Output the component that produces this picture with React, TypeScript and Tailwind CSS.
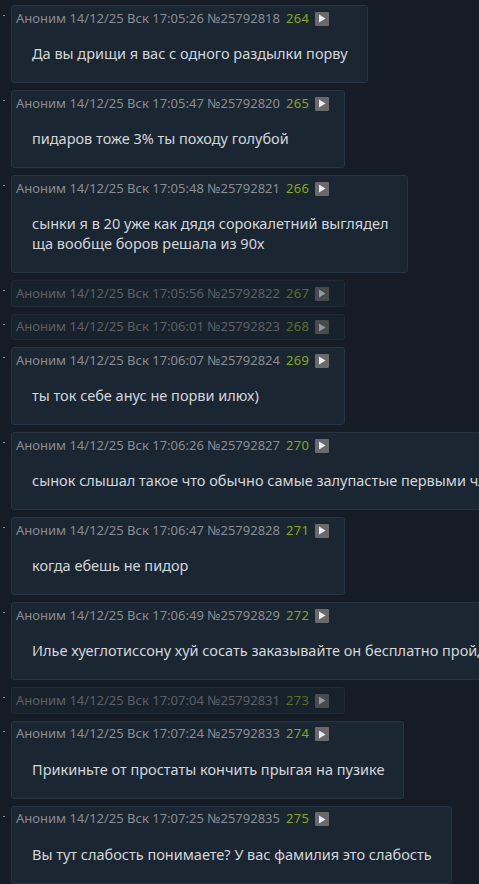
import React from "react";

type Post = {
  time: string;
  num: string;
  idx: number;
  lines?: string[];
  hidden?: boolean;
};

const posts: Post[] = [
  { time: "17:05:26", num: "25792818", idx: 264, lines: ["Да вы дрищи я вас с одного раздылки порву"] },
  { time: "17:05:47", num: "25792820", idx: 265, lines: ["пидаров тоже 3% ты походу голубой"] },
  {
    time: "17:05:48",
    num: "25792821",
    idx: 266,
    lines: ["сынки я в 20 уже как дядя сорокалетний выглядел", "ща вообще боров решала из 90х"],
  },
  { time: "17:05:56", num: "25792822", idx: 267, hidden: true },
  { time: "17:06:01", num: "25792823", idx: 268, hidden: true },
  { time: "17:06:07", num: "25792824", idx: 269, lines: ["ты ток себе анус не порви илюх)"] },
  {
    time: "17:06:26",
    num: "25792827",
    idx: 270,
    lines: ["сынок слышал такое что обычно самые залупастые первыми члены теряют"],
  },
  { time: "17:06:47", num: "25792828", idx: 271, lines: ["когда ебешь не пидор"] },
  {
    time: "17:06:49",
    num: "25792829",
    idx: 272,
    lines: ["Илье хуеглотиссону хуй сосать заказывайте он бесплатно пройдёт"],
  },
  { time: "17:07:04", num: "25792831", idx: 273, hidden: true },
  { time: "17:07:24", num: "25792833", idx: 274, lines: ["Прикиньте от простаты кончить прыгая на пузике"] },
  { time: "17:07:25", num: "25792835", idx: 275, lines: ["Вы тут слабость понимаете? У вас фамилия это слабость"] },
];

function PlayBtn() {
  return (
    <span className="inline-flex items-center justify-center w-[14px] h-[14px] bg-[#6a6a6a] rounded-[1px]">
      <svg width="8" height="9" viewBox="0 0 8 9">
        <path d="M1 0.5 L7.5 4.5 L1 8.5 Z" fill="#ececec" />
      </svg>
    </span>
  );
}

function PostRow({ p }: { p: Post }) {
  return (
    <div className="flex items-start">
      <div className="w-[11px] shrink-0 flex pl-[3px] pt-[10px]">
        <span className="block w-[2px] h-[1px] bg-[#8a8f95]" />
      </div>
      <div
        className={
          "inline-block shrink-0 bg-[#1b2633] border border-[#263343] rounded-[3px] " +
          (p.hidden ? "opacity-60 h-[26.5px]" : "")
        }
      >
        <div className="flex items-center h-[25px] pl-[4px] pr-[15px] text-[13px] text-[#898d92] whitespace-nowrap">
          <span>Аноним 14/12/25 Вск {p.time} №{p.num}</span>
          <span className="ml-[6px] text-[#86a61f] tracking-[0.3px]">{p.idx}</span>
          <span className="ml-[6px] flex">
            <PlayBtn />
          </span>
        </div>
        {p.lines && (
          <div className="pl-[20px] pr-[19px] pt-[12px] pb-[19px] text-[14.5px] leading-[20px] text-[#d3d6d9] whitespace-nowrap">
            {p.lines.map((l, i) => (
              <div key={i}>{l}</div>
            ))}
          </div>
        )}
      </div>
    </div>
  );
}

export default function App() {
  return (
    <div
      className="w-[479px] h-[884px] overflow-hidden bg-[#151c25] pt-[5px]"
      style={{ fontFamily: '"Noto Sans", "DejaVu Sans", sans-serif' }}
    >
      <div className="flex flex-col gap-[7px]">
        {posts.map((p) => (
          <PostRow key={p.num} p={p} />
        ))}
      </div>
    </div>
  );
}
